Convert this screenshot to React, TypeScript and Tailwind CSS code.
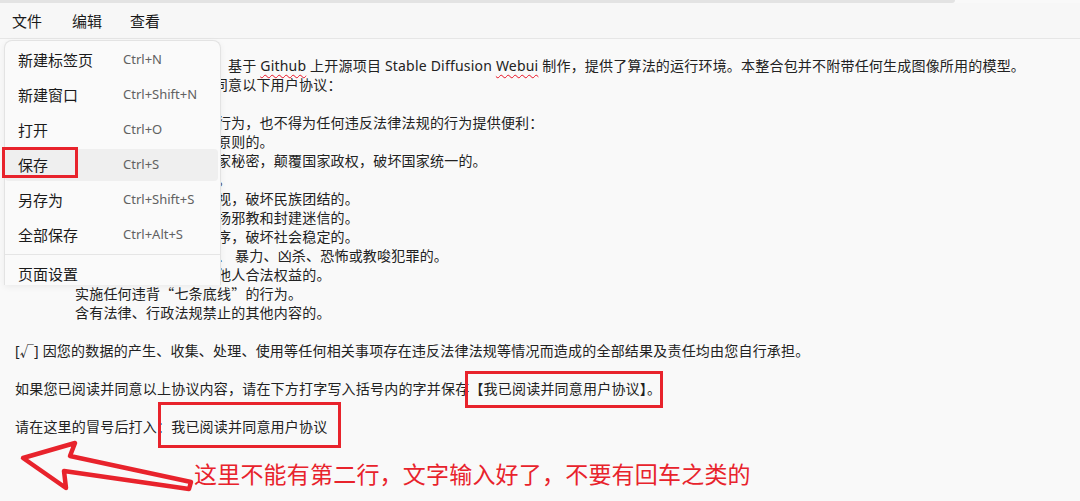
import React from "react";

const Q = ({ children }: { children: React.ReactNode }) => (
  <span className="font-['Noto_Sans_CJK_SC',sans-serif]">{children}</span>
);

type Line = { t: React.ReactNode; indent?: boolean };

const menuItems: { label: string; key: string; active?: boolean }[] = [
  { label: "新建标签页", key: "Ctrl+N" },
  { label: "新建窗口", key: "Ctrl+Shift+N" },
  { label: "打开", key: "Ctrl+O" },
  { label: "保存", key: "Ctrl+S", active: true },
  { label: "另存为", key: "Ctrl+Shift+S" },
  { label: "全部保存", key: "Ctrl+Alt+S" },
];

export default function App() {
  const lines: Line[] = [
    {
      t: (
        <>
          本整合包为免费开源的绘画软件，基于{" "}
          <span className="underline decoration-wavy decoration-[#e81123] decoration-1 underline-offset-[3px]">Github</span>{" "}
          上开源项目 Stable Diffusion{" "}
          <span className="underline decoration-wavy decoration-[#e81123] decoration-1 underline-offset-[3px]">Webui</span>{" "}
          制作，提供了算法的运行环境。本整合包并不附带任何生成图像所用的模型。
        </>
      ),
    },
    { t: "使用本软件前，请您仔细阅读并同意以下用户协议：" },
    { t: "\u00a0" },
    { t: "[√] 您承诺不用本软件从事违法 行为，也不得为任何违反法律法规的行为提供便利：" },
    { t: "反对宪法所确定的基本原则的。", indent: true },
    { t: "危害国家安全，泄露国家秘密，颠覆国家政权，破坏国家统一的。", indent: true },
    { t: "损害国家荣誉和利益的。", indent: true },
    { t: "煽动民族仇恨、民族歧视，破坏民族团结的。", indent: true },
    { t: "破坏国家宗教政策，宣扬邪教和封建迷信的。", indent: true },
    { t: "散布谣言，扰乱社会秩序，破坏社会稳定的。", indent: true },
    { t: "散布淫秽、色情、赌博、 暴力、凶杀、恐怖或教唆犯罪的。", indent: true },
    { t: "侮辱或诽谤他人，侵害他人合法权益的。", indent: true },
    {
      t: (
        <>
          实施任何违背<Q>“</Q>七条底线<Q>”</Q>的行为。
        </>
      ),
      indent: true,
    },
    { t: "含有法律、行政法规禁止的其他内容的。", indent: true },
    { t: "\u00a0" },
    { t: "[√] 因您的数据的产生、收集、处理、使用等任何相关事项存在违反法律法规等情况而造成的全部结果及责任均由您自行承担。" },
    { t: "\u00a0" },
    {
      t: (
        <>
          如果您已阅读并同意以上协议内容，请在下方打字写入括号内的字并保存
          <span className="relative">
            【我已阅读并同意用户协议】
            <span className="absolute left-[-4px] top-[-8px] w-[198px] h-[37px] border-[3px] border-[#e8232c]" />
          </span>
          。
        </>
      ),
    },
    { t: "\u00a0" },
    {
      t: (
        <>
          请在这里的冒号后打入：
          <span className="relative">
            我已阅读并同意用户协议
            <span className="absolute left-[-13px] top-[-15px] w-[183px] h-[46px] border-[3px] border-[#e8232c]" />
          </span>
        </>
      ),
    },
  ];

  return (
    <div className="relative w-[1080px] h-[501px] overflow-hidden bg-[#f9f9f9] text-[#222] font-['Noto_Sans','Noto_Sans_CJK_SC',sans-serif]">
      {/* top strip */}
      <div className="h-[3px] w-[955px] bg-[#e3e3e3] rounded-br-[3px]" />
      {/* menu bar */}
      <div className="h-[36px] flex items-center bg-[#f7f7f7] border-b border-[#e6e6e6] text-[15px] text-[#1a1a1a] pl-[12px] pt-[1px]">
        <span>文件</span>
        <span className="ml-[30px]">编辑</span>
        <span className="ml-[28px]">查看</span>
      </div>

      {/* editor body */}
      <div className="pt-[17px] pl-[15px] text-[14px] leading-[19px] tracking-[0.2px] whitespace-pre">
        {lines.map((l, i) => (
          <div key={i} className={l.indent ? "pl-[60px]" : ""}>
            {l.t}
          </div>
        ))}
      </div>

      {/* file menu overlay */}
      <div className="absolute left-[4px] top-[40px] w-[217px] h-[245px] overflow-hidden bg-[#fafafa] border-x border-t border-[#e3e3e3] rounded-t-[8px] shadow-[0_2px_6px_rgba(0,0,0,0.06)] pt-[3px] flex flex-col">
        {menuItems.map((m, i) => (
          <div
            key={m.label}
            className={
              "shrink-0 h-[32px] mr-[2px] rounded-[4px] grid grid-cols-[105px_1fr] items-center pl-[13px] " +
              (i > 0 ? "mt-[3px] " : "") +
              (m.active ? "bg-[#efefef]" : "")
            }
          >
            <span className="text-[15px] text-[#1a1a1a]">{m.label}</span>
            <span className="text-[13px] text-[#616161]">{m.key}</span>
          </div>
        ))}
        <div className="shrink-0 mt-[3px] h-px bg-[#e5e5e5]" />
        <div className="shrink-0 mt-[3px] h-[32px] flex items-center pl-[13px]">
          <span className="text-[15px] text-[#1a1a1a]">页面设置</span>
        </div>
      </div>
      {/* red box on 保存 */}
      <div className="absolute left-[2px] top-[147px] w-[76px] h-[31px] border-[3px] border-[#e8232c]" />

      {/* arrow annotation */}
      <svg className="absolute left-0 top-[436px]" width="200" height="60" viewBox="0 436 200 60">
        <path
          d="M23 458 L75 443 L70 456 L191 482 L189 489 L64 471 L66 488 Z"
          fill="none"
          stroke="#e8232c"
          strokeWidth="4.5"
          strokeLinejoin="round"
        />
      </svg>
      <div className="absolute left-[194px] top-[458px] text-[23px] leading-[30px] tracking-[0.2px] text-[#e8232c] font-['Noto_Sans_CJK_SC',sans-serif]">
        这里不能有第二行，文字输入好了，不要有回车之类的
      </div>
    </div>
  );
}
